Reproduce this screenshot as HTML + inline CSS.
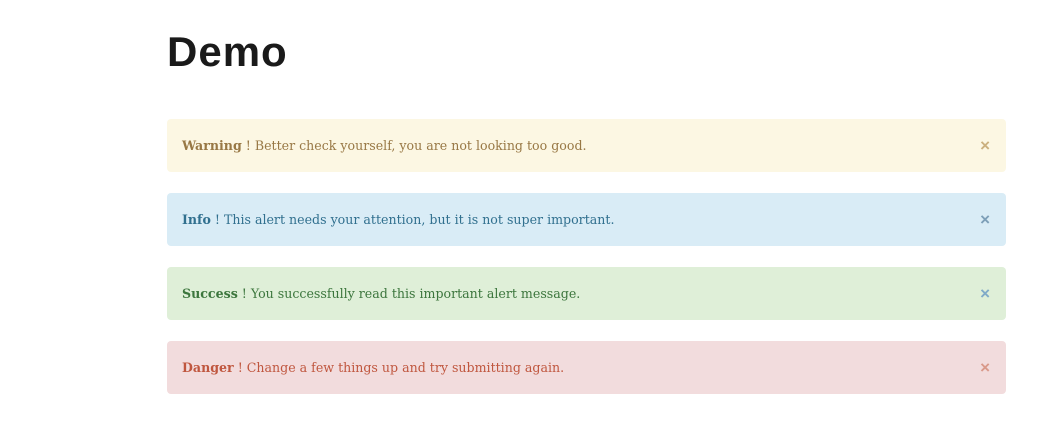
<!DOCTYPE html>
<html><head><style>
body{margin:0;background:#fff;width:1046px;height:446px;overflow:hidden;}
h1{position:absolute;left:167px;top:26px;margin:0;font:bold 42px/52px "Liberation Sans",sans-serif;color:#1a1a1a;letter-spacing:1px}
.a{position:absolute;left:167px;width:839px;height:53px;border-radius:4px;font:12.6px/53px "DejaVu Serif","Liberation Serif",serif;box-sizing:border-box;padding-left:15px}
.a b{font-weight:bold}
.x{position:absolute;right:16px;top:0;font:bold 17px/53px "Liberation Sans",sans-serif}
</style></head><body>
<h1>Demo</h1>
<div class="a" style="top:119px;background:#fcf7e3;color:#987845"><b>Warning</b> ! Better check yourself, you are not looking too good.<span class="x" style="color:#cbb07e">×</span></div>
<div class="a" style="top:193px;background:#d9ecf6;color:#31708f"><b>Info</b> ! This alert needs your attention, but it is not super important.<span class="x" style="color:#7d9fb8">×</span></div>
<div class="a" style="top:267px;background:#dfefd8;color:#3c763d"><b>Success</b> ! You successfully read this important alert message.<span class="x" style="color:#80aac8">×</span></div>
<div class="a" style="top:341px;background:#f2dcdd;color:#c0573f"><b>Danger</b> ! Change a few things up and try submitting again.<span class="x" style="color:#d9998a">×</span></div>
</body></html>
